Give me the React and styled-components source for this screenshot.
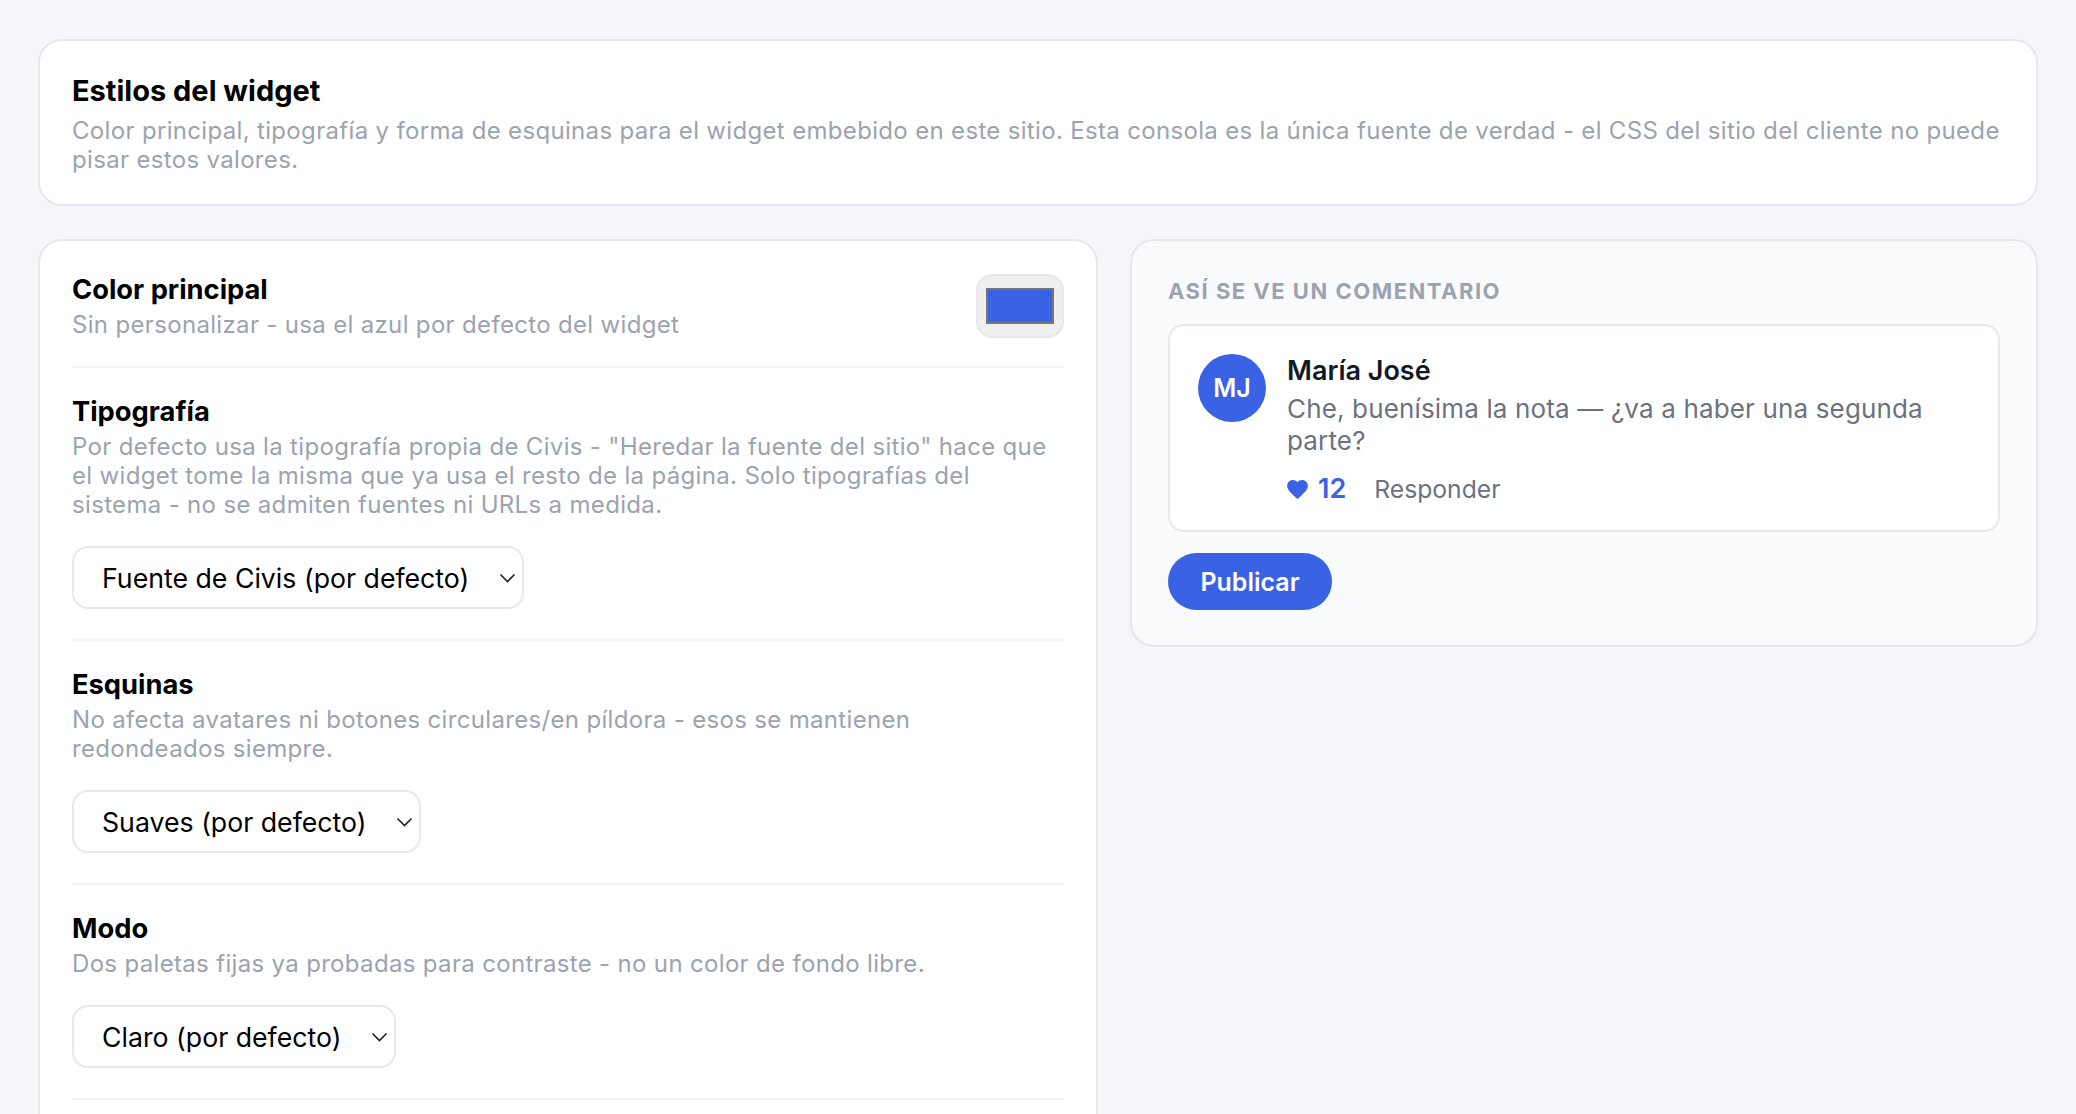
import styled, { createGlobalStyle } from "styled-components";

const chevron = encodeURIComponent(
  '<svg xmlns="http://www.w3.org/2000/svg" width="17" height="10" viewBox="0 0 17 10"><path d="M1.5 1.5L8.5 8.5l7-7" fill="none" stroke="#222" stroke-width="1.6"/></svg>'
);

const Global = createGlobalStyle`
  html, body {
    margin: 0;
    height: 100%;
    overflow: hidden;
    background: #f5f5fa;
    font-family: Inter, "Liberation Sans", sans-serif;
  }
  * { box-sizing: border-box; }
`;

const Page = styled.div`
  padding: 39px 38px;
  display: flex;
  flex-direction: column;
  gap: 33px;
`;

const Card = styled.section`
  background: #fff;
  border: 2px solid #e7e7ec;
  border-radius: 24px;
  padding: 32px;
`;

const Header = styled(Card)`
  padding: 32px 32px 30px;
`;

const Heading = styled.h2`
  margin: 0 0 7px;
  font-size: 29px;
  line-height: 36px;
  font-weight: 700;
  color: #000;
`;

const Sub = styled.p`
  margin: 0;
  font-size: 24px;
  line-height: 29px;
  letter-spacing: 0.33px;
  color: #9ca3af;
`;

const Columns = styled.div`
  display: grid;
  grid-template-columns: 1060px 1fr;
  gap: 32px;
  align-items: start;
`;

const Settings = styled(Card)`
  padding: 32px 32px 300px;
`;

const Row = styled.div`
  padding: ${(p) => (p.$first ? "0 0 27px" : "27px 0 29px")};
  border-bottom: 2px solid #f3f4f6;
`;

const TopRow = styled(Row)`
  display: flex;
  justify-content: space-between;
  align-items: center;
`;

const SelectRow = styled(Row)`
  padding-bottom: 30px;
`;

const Label = styled.h3`
  margin: 0 0 3px;
  font-size: 27.3px;
  line-height: 34px;
  font-weight: 700;
  color: #000;
`;

const Select = styled.select`
  display: block;
  margin-top: 27px;
  height: 63px;
  padding: 0 52px 0 28px;
  appearance: none;
  font-family: inherit;
  font-size: 26.7px;
  color: #000;
  background: #fff url("data:image/svg+xml,${chevron}") no-repeat right 6px center;
  border: 2px solid #e7e7ec;
  border-radius: 16px;
`;

const SwatchFrame = styled.div`
  width: 88px;
  height: 64px;
  padding: 12px 8px;
  background: #efefef;
  border: 2px solid #e7e7ec;
  border-radius: 16px;
`;

const SwatchColor = styled.div`
  height: 100%;
  background: #3a62e5;
  border: 2px solid #767676;
`;

const Preview = styled(Card)`
  background: #f9fafc;
  padding: 35px 36px 35px;
`;

const Eyebrow = styled.div`
  font-size: 22px;
  line-height: 30px;
  font-weight: 700;
  letter-spacing: 1.5px;
  color: #9ca3af;
  margin-bottom: 18px;
`;

const Comment = styled.div`
  display: flex;
  gap: 21px;
  padding: 28px 28px 25px;
  background: #fff;
  border: 2px solid #e7e7ec;
  border-radius: 16px;
`;

const Avatar = styled.div`
  flex: none;
  width: 68px;
  height: 68px;
  border-radius: 50%;
  background: #3a62e5;
  color: #fff;
  display: flex;
  align-items: center;
  justify-content: center;
  font-size: 25px;
  font-weight: 600;
`;

const Name = styled.div`
  font-size: 27px;
  line-height: 34px;
  font-weight: 600;
  color: #111827;
`;

const Text = styled.p`
  margin: 5px 0 0;
  font-size: 26px;
  line-height: 32px;
  letter-spacing: 0.15px;
  color: #6b7280;
`;

const Actions = styled.div`
  display: flex;
  align-items: center;
  gap: 28px;
  margin-top: 16px;
  font-size: 24.7px;
  line-height: 32px;
  color: #6b7280;
`;

const Likes = styled.span`
  display: flex;
  align-items: center;
  gap: 10px;
  color: #3a62e5;
  font-size: 27px;
  font-weight: 600;
`;

const Publish = styled.button`
  display: block;
  margin-top: 21px;
  width: 164px;
  height: 57px;
  border: 0;
  border-radius: 30px;
  background: #3a62e5;
  color: #fff;
  font-family: inherit;
  font-size: 25px;
  font-weight: 600;
`;

const Heart = () => (
  <svg width="21" height="19" viewBox="2 3 20 18.35" fill="currentColor">
    <path d="M12 21.35l-1.45-1.32C5.4 15.36 2 12.28 2 8.5 2 5.42 4.42 3 7.5 3c1.74 0 3.41.81 4.5 2.09C13.09 3.81 14.76 3 16.5 3 19.58 3 22 5.42 22 8.5c0 3.78-3.4 6.86-8.55 11.54L12 21.35z" />
  </svg>
);

export default function App() {
  return (
    <>
      <Global />
      <Page>
        <Header>
          <Heading>Estilos del widget</Heading>
          <Sub>
            Color principal, tipografía y forma de esquinas para el widget embebido en este sitio. Esta consola es la
            única fuente de verdad - el CSS del sitio del cliente no puede pisar estos valores.
          </Sub>
        </Header>
        <Columns>
          <Settings>
            <TopRow $first>
              <div>
                <Label>Color principal</Label>
                <Sub>Sin personalizar - usa el azul por defecto del widget</Sub>
              </div>
              <SwatchFrame>
                <SwatchColor />
              </SwatchFrame>
            </TopRow>
            <SelectRow>
              <Label>Tipografía</Label>
              <Sub>
                Por defecto usa la tipografía propia de Civis - "Heredar la fuente del sitio" hace que el widget tome la
                misma que ya usa el resto de la página. Solo tipografías del sistema - no se admiten fuentes ni URLs a
                medida.
              </Sub>
              <Select defaultValue="civis">
                <option value="civis">Fuente de Civis (por defecto)</option>
              </Select>
            </SelectRow>
            <SelectRow>
              <Label>Esquinas</Label>
              <Sub>
                No afecta avatares ni botones circulares/en píldora - esos se mantienen redondeados siempre.
              </Sub>
              <Select defaultValue="suaves">
                <option value="suaves">Suaves (por defecto)</option>
              </Select>
            </SelectRow>
            <SelectRow>
              <Label>Modo</Label>
              <Sub>Dos paletas fijas ya probadas para contraste - no un color de fondo libre.</Sub>
              <Select defaultValue="claro">
                <option value="claro">Claro (por defecto)</option>
              </Select>
            </SelectRow>
          </Settings>
          <Preview>
            <Eyebrow>ASÍ SE VE UN COMENTARIO</Eyebrow>
            <Comment>
              <Avatar>MJ</Avatar>
              <div>
                <Name>María José</Name>
                <Text>Che, buenísima la nota — ¿va a haber una segunda parte?</Text>
                <Actions>
                  <Likes>
                    <Heart />
                    12
                  </Likes>
                  <span>Responder</span>
                </Actions>
              </div>
            </Comment>
            <Publish>Publicar</Publish>
          </Preview>
        </Columns>
      </Page>
    </>
  );
}
